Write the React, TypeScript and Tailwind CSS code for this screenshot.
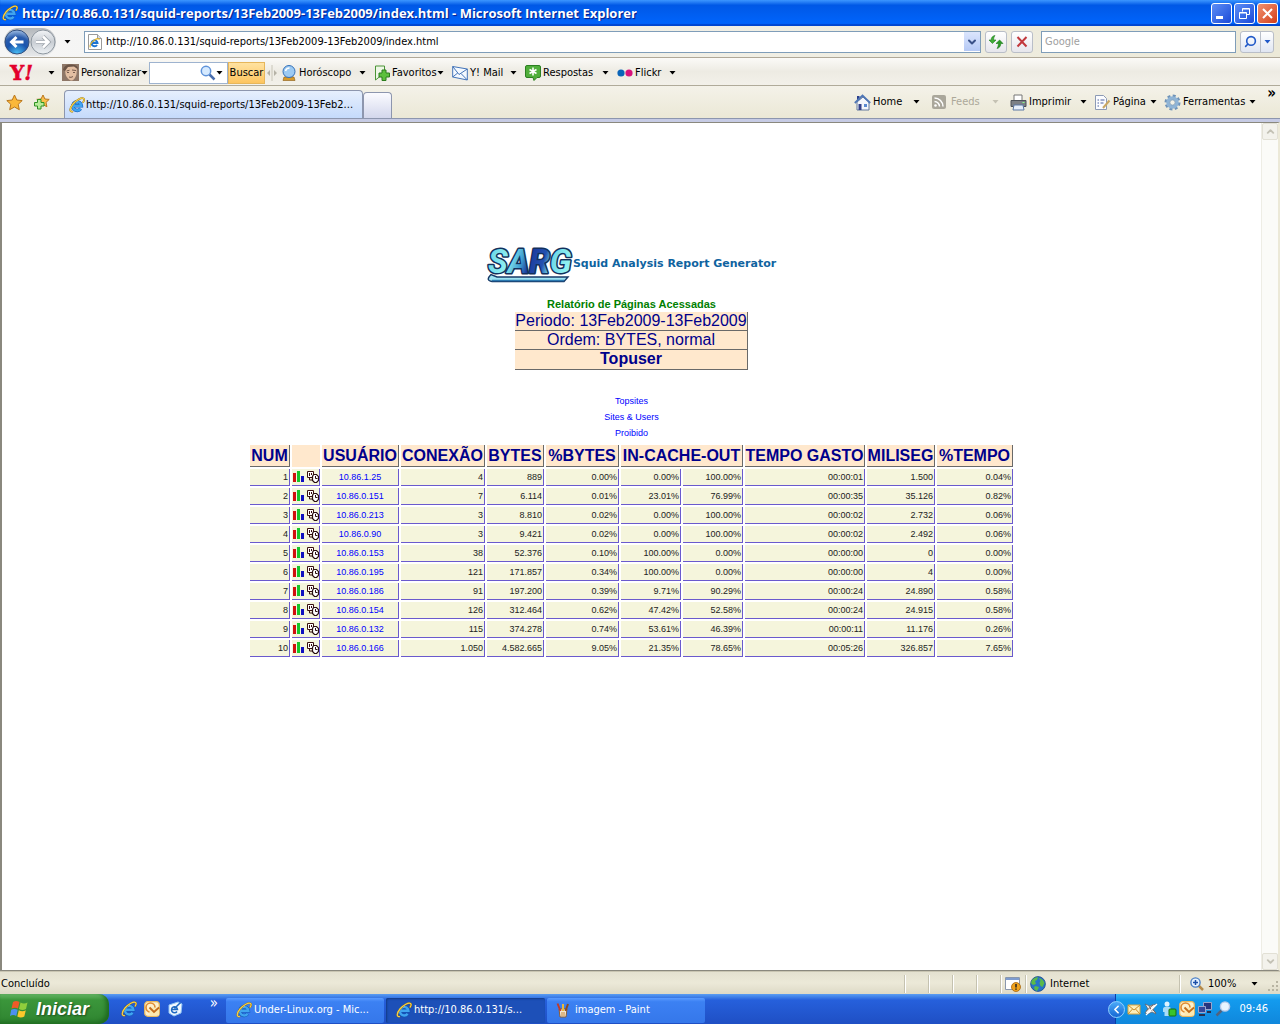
import type { ReactNode } from 'react'
import { ChevronDown, ChevronUp, ChevronLeft, Search } from 'lucide-react'

const columns = [
  { label: 'NUM', span: 1 },
  { label: '', span: 1 },
  { label: 'USUÁRIO', span: 1 },
  { label: 'CONEXÃO', span: 1 },
  { label: 'BYTES', span: 1 },
  { label: '%BYTES', span: 1 },
  { label: 'IN-CACHE-OUT', span: 2 },
  { label: 'TEMPO GASTO', span: 1 },
  { label: 'MILISEG', span: 1 },
  { label: '%TEMPO', span: 1 },
]

// user, connections, bytes, %bytes, cache in, cache out, time, ms, %time
const users = [
  ['10.86.1.25', '4', '889', '0.00%', '0.00%', '100.00%', '00:00:01', '1.500', '0.04%'],
  ['10.86.0.151', '7', '6.114', '0.01%', '23.01%', '76.99%', '00:00:35', '35.126', '0.82%'],
  ['10.86.0.213', '3', '8.810', '0.02%', '0.00%', '100.00%', '00:00:02', '2.732', '0.06%'],
  ['10.86.0.90', '3', '9.421', '0.02%', '0.00%', '100.00%', '00:00:02', '2.492', '0.06%'],
  ['10.86.0.153', '38', '52.376', '0.10%', '100.00%', '0.00%', '00:00:00', '0', '0.00%'],
  ['10.86.0.195', '121', '171.857', '0.34%', '100.00%', '0.00%', '00:00:00', '4', '0.00%'],
  ['10.86.0.186', '91', '197.200', '0.39%', '9.71%', '90.29%', '00:00:24', '24.890', '0.58%'],
  ['10.86.0.154', '126', '312.464', '0.62%', '47.42%', '52.58%', '00:00:24', '24.915', '0.58%'],
  ['10.86.0.132', '115', '374.278', '0.74%', '53.61%', '46.39%', '00:00:11', '11.176', '0.26%'],
  ['10.86.0.166', '1.050', '4.582.665', '9.05%', '21.35%', '78.65%', '00:05:26', '326.857', '7.65%'],
]

function IeIcon({ className = 'size-4' }: { className?: string }) {
  return (
    <svg viewBox="0 0 16 16" className={`${className} shrink-0`} aria-hidden="true">
      <path d="M4 8.800H12.400A4.300 4.300 0 1 0 11.600 11.700" fill="none" stroke="#0f55b4" strokeWidth="3.400" />
      <path d="M4 8.800H12.400A4.300 4.300 0 1 0 11.600 11.700" fill="none" stroke="#3fa4f0" strokeWidth="2.400" />
      <path d="M4.800 6.800Q6 4.500 8.600 4.400" fill="none" stroke="#a5e2ff" strokeWidth="1" />
      <path d="M3.400 14.600C.4 15 .6 11.200 4 7S12.600.2 14.500 1.400c1 .7.6 2.200-.3 3.700" fill="none" stroke="#8a6a14" strokeWidth="1.800" strokeLinecap="round" />
      <path d="M3.400 14.600C.4 15 .6 11.200 4 7S12.600.2 14.500 1.400c1 .7.6 2.200-.3 3.700" fill="none" stroke="#f6cf4a" strokeWidth="1.200" strokeLinecap="round" />
    </svg>
  )
}

function Arrow({ className = 'text-black' }: { className?: string }) {
  return (
    <svg viewBox="0 0 7 4" className={`h-1 w-[7px] shrink-0 ${className}`} aria-hidden="true">
      <path d="M.5 0h6l-3 3.500z" fill="currentColor" />
    </svg>
  )
}

function ToolItem({ icon, label, width, disabled }: { icon: ReactNode; label: string; width: string; disabled?: boolean }) {
  return (
    <button className={`flex h-6 shrink-0 items-center justify-between ${width} ${disabled ? 'text-[#aca899]' : 'text-black'}`} disabled={disabled}>
      <span className="flex items-center gap-0.5 whitespace-nowrap">
        {icon}
        {label}
      </span>
      <Arrow className={disabled ? 'text-[#c5c2b4]' : 'text-black'} />
    </button>
  )
}

function TitleBar() {
  return (
    <header className="flex h-[26px] shrink-0 items-center justify-between bg-linear-to-b from-[#3c96ff] via-[#0058e6] via-20% to-[#0066ff] pl-0.5 pr-0.5 shadow-[inset_0_-2px_1px_#0046d0]">
      <div className="flex min-w-0 items-center gap-1">
        <IeIcon />
        <h1 className="truncate font-['Open_Sans',sans-serif] text-[13px] font-bold text-white [text-shadow:1px_1px_1px_#0a1883]">
          http://10.86.0.131/squid-reports/13Feb2009-13Feb2009/index.html - Microsoft Internet Explorer
        </h1>
      </div>
      <div className="flex shrink-0 gap-0.5">
        <button aria-label="Minimizar" className="flex size-[21px] items-end rounded-[3px] border border-white bg-linear-to-br from-[#5e8df5] to-[#1c48d8] pb-1 pl-1">
          <span className="h-[3px] w-[7px] bg-white" />
        </button>
        <button aria-label="Restaurar" className="flex size-[21px] items-center justify-center rounded-[3px] border border-white bg-linear-to-br from-[#5e8df5] to-[#1c48d8]">
          <svg viewBox="0 0 11 11" className="size-[11px]">
            <path d="M3.500 3.500v-3h7v6h-3M3.500 1h7" fill="none" stroke="#fff" />
            <path d="M.5 4.500h7v6h-7zM.5 5h7" fill="none" stroke="#fff" />
          </svg>
        </button>
        <button aria-label="Fechar" className="flex size-[21px] items-center justify-center rounded-[3px] border border-white bg-linear-to-br from-[#f0916f] to-[#d23a10]">
          <svg viewBox="0 0 11 11" className="size-[11px]">
            <path d="M1 1l9 9M10 1l-9 9" stroke="#fff" strokeWidth="2" />
          </svg>
        </button>
      </div>
    </header>
  )
}

function AddressBar() {
  return (
    <div className="flex h-8 shrink-0 items-center border-b border-[#b0a898] bg-linear-to-r from-[#f6f6f6] to-[#ece9d8] pl-1 pr-1.5">
      <div className="flex h-7 shrink-0 items-center rounded-full bg-linear-to-b from-[#b4b8bc] to-[#e6e8ea]">
        <button aria-label="Voltar" className="size-[26px]">
          <svg viewBox="0 0 26 26" className="size-[26px]">
            <defs>
              <radialGradient id="back" cx=".5" cy="1" r=".95">
                <stop offset="0" stopColor="#4cc4f8" />
                <stop offset=".5" stopColor="#1a54ae" />
                <stop offset=".75" stopColor="#2a5cac" />
                <stop offset="1" stopColor="#8fb0dc" />
              </radialGradient>
            </defs>
            <circle cx="13" cy="13" r="12" fill="url(#back)" stroke="#35507e" />
            <path d="M19.500 13H8M12.500 8L7.500 13l5 5" fill="none" stroke="#fff" strokeWidth="3" />
          </svg>
        </button>
        <button aria-label="Avançar" className="size-[26px]">
          <svg viewBox="0 0 26 26" className="size-[26px]">
            <defs>
              <linearGradient id="fwd" x1="0" y1="0" x2="0" y2="1">
                <stop offset="0" stopColor="#f2f4f6" />
                <stop offset=".5" stopColor="#c9ced4" />
                <stop offset="1" stopColor="#eef2f5" />
              </linearGradient>
            </defs>
            <circle cx="13" cy="13" r="12" fill="url(#fwd)" stroke="#8d969f" />
            <path d="M6 13h12M13 7.500l5.500 5.500-5.500 5.500" fill="none" stroke="#9aa1a8" strokeWidth="4" />
            <path d="M6 13h12M13 7.500l5.500 5.500-5.500 5.500" fill="none" stroke="#fff" strokeWidth="2.500" />
          </svg>
        </button>
      </div>
      <button aria-label="Páginas recentes" className="flex h-6 w-[28px] shrink-0 items-center pl-2">
        <Arrow />
      </button>
      <label className="flex h-[22px] min-w-0 flex-1 items-center border border-[#7f9db9] bg-white pl-0.5">
        <svg viewBox="0 0 16 16" className="size-4 shrink-0" aria-hidden="true">
          <path d="M1.500.5h9l4 4v11h-13z" fill="#fff" stroke="#9a9a9a" />
          <path d="M10.500.5v4h4" fill="#ddd" stroke="#9a9a9a" />
          <path d="M4.500 9H10.500A3 3 0 1 0 10 11" fill="none" stroke="#1d74d2" strokeWidth="2" />
          <path d="M3.400 13.500c-1.400-1.500.6-5 3.600-7s5-2.500 5.200-.8" fill="none" stroke="#e3b52c" strokeWidth="1.200" />
        </svg>
        <input aria-label="Endereço" defaultValue="http://10.86.0.131/squid-reports/13Feb2009-13Feb2009/index.html" className="h-full min-w-0 flex-1 px-[3px] outline-none" />
        <button aria-label="Mostrar endereços" className="flex h-[19px] w-4 items-center justify-center bg-linear-to-b from-[#dbe5fd] to-[#b5c9f5] text-[#3a5187]">
          <ChevronDown size={12} strokeWidth={4} />
        </button>
      </label>
      <button aria-label="Atualizar" className="ml-1 flex size-[22px] shrink-0 items-center justify-center rounded-[3px] border border-[#b9bec8] bg-linear-to-b from-white to-[#e6e6ec]">
        <svg viewBox="0 0 16 16" className="size-4">
          <path d="M1 6h2.200C3.200 3.500 4.500 2 7 1.500 6 3 5.600 4 5.600 6H8L4.400 9.500z" fill="#3fae36" stroke="#1b7a1a" strokeWidth=".6" />
          <path d="M15 9.500h-2.200c0 2.500-1.300 4.500-3.800 5 1-1.500 1.400-3 1.400-5H8L11.600 6z" fill="#2a9a24" stroke="#1b7a1a" strokeWidth=".6" />
        </svg>
      </button>
      <button aria-label="Parar" className="ml-1 flex size-[22px] shrink-0 items-center justify-center rounded-[3px] border border-[#b9bec8] bg-linear-to-b from-white to-[#e6e6ec]">
        <svg viewBox="0 0 12 12" className="size-3">
          <path d="M1.500 1l9 9.500M10.500 1l-9 9.500" stroke="#c2383c" strokeWidth="2" />
        </svg>
      </button>
      <input type="search" aria-label="Google" placeholder="Google" className="ml-2 h-[22px] w-[195px] shrink-0 border border-[#7f9db9] bg-white px-[3px] outline-none placeholder:text-[#a0a0a0]" />
      <div className="ml-1 flex h-[22px] shrink-0 items-center rounded-[3px] border border-[#b9bec8] bg-linear-to-b from-white to-[#e0e6f2]">
        <button aria-label="Pesquisar" className="flex h-full w-5 items-center justify-center border-r border-[#b9bec8] text-[#2159c8]">
          <Search size={13} strokeWidth={3} className="-scale-x-100" />
        </button>
        <button aria-label="Opções de pesquisa" className="flex h-full w-3 items-center justify-center">
          <Arrow className="text-[#2159c8]" />
        </button>
      </div>
    </div>
  )
}

function YahooBar() {
  return (
    <div className="flex h-7 shrink-0 items-center border-b border-[#b0ab9a] bg-linear-to-b from-[#fbfaf7] via-[#edebe3] to-[#f3f1ea] pt-0.5 pl-2">
      <button aria-label="Yahoo!" className="flex w-[47px] shrink-0 items-center justify-between">
        <svg viewBox="0 0 34 24" className="h-6 w-[34px] overflow-visible">
          <text x="2" y="19" fontFamily="DejaVu Serif, serif" fontWeight="bold" fontSize="20" fill="#e3002b" stroke="#e3002b" strokeWidth=".5">
            Y
            <tspan fontStyle="italic">!</tspan>
          </text>
        </svg>
        <Arrow />
      </button>
      <div className="ml-[7px] flex">
        <ToolItem
          width="w-[84px]"
          label="Personalizar"
          icon={
            <svg viewBox="0 0 17 17" className="size-[17px]" aria-hidden="true">
              <rect width="17" height="17" fill="#8e7767" />
              <path d="M3 4c3-3 10-3 12 0l-.5 6c-1 4-3 6.500-5 6.500S4.500 14 3.500 10z" fill="#e3bfa2" />
              <path d="M1 6C2 1 6 0 10 .5s6 2 6 5l-4-3-6 .5-3 4z" fill="#6b5446" />
              <path d="M4.500 7l3-.8M10 6l4 .5M5 8.500h2M11 8.500h2M7 13q2 1 4-.5" fill="none" stroke="#5a4238" strokeWidth=".8" />
            </svg>
          }
        />
      </div>
      <form className="ml-[3px] flex h-[22px] shrink-0" onSubmit={(e) => e.preventDefault()}>
        <label className="flex w-[79px] items-center border border-[#9eb3cf] bg-white pr-1">
          <input aria-label="Busca Yahoo!" className="w-0 flex-1 outline-none" />
          <svg viewBox="0 0 16 16" className="size-4 shrink-0" aria-hidden="true">
            <path d="M9.500 9.500l5 5" stroke="#4b6fae" strokeWidth="2.500" />
            <circle cx="6" cy="6" r="4.700" fill="#d6eaff" stroke="#5f93da" strokeWidth="1.500" />
          </svg>
          <Arrow />
        </label>
        <button className="w-[37px] border border-[#e6b65a] bg-linear-to-b from-[#ffe2a0] to-[#fdc55e]">Buscar</button>
      </form>
      <svg viewBox="0 0 10 16" className="mx-0.5 h-4 w-2.5 shrink-0" aria-hidden="true">
        <path d="M5 0v16" stroke="#c8c5b8" />
        <path d="M3 5v6L0 8zM7 5v6l3-3z" fill="#b5b2a6" />
      </svg>
      <div className="ml-0.5 flex gap-2">
        <ToolItem
          width="w-[85px]"
          label="Horóscopo"
          icon={
            <svg viewBox="0 0 16 16" className="size-4" aria-hidden="true">
              <path d="M3 12h10l1 3.500H2z" fill="#d69a2c" stroke="#8a5a12" strokeWidth=".6" />
              <circle cx="8" cy="6.500" r="6" fill="#9ccaf2" stroke="#3470b8" />
              <path d="M4.500 6c.5-2 2-3 4-3" stroke="#fff" strokeWidth="1.500" fill="none" />
            </svg>
          }
        />
        <ToolItem
          width="w-[70px]"
          label="Favoritos"
          icon={
            <svg viewBox="0 0 16 16" className="size-4" aria-hidden="true">
              <path d="M1.500 1h9v13l-4-3-5 4z" fill="#eef7e6" stroke="#4b9437" />
              <path d="M8 5h4v3h3.500v4H12v3.500H8V12H5V8h3z" fill="#5cc03c" stroke="#2a7d1d" />
            </svg>
          }
        />
        <ToolItem
          width="w-[65px]"
          label="Y! Mail"
          icon={
            <svg viewBox="0 0 16 16" className="size-4" aria-hidden="true">
              <path d="M.7 1.500L15.300 4v11L.7 12z" fill="#f4f9ff" stroke="#4474b8" />
              <path d="M.7 1.500L7 9.500 15.300 4M.7 12l5-4M15.300 15L9 8.500" fill="none" stroke="#4474b8" />
            </svg>
          }
        />
        <ToolItem
          width="w-[84px]"
          label="Respostas"
          icon={
            <svg viewBox="0 0 16 16" className="size-4" aria-hidden="true">
              <path d="M2 .5h12q1.500 0 1.500 1.500v9q0 1.500-1.500 1.500h-2l-3 3-1-3H2Q.5 12.500.5 11V2Q.5.5 2 .5z" fill="#4fae3a" stroke="#2c7f22" />
              <path d="M8 2.500v8M4.500 4.500l7 4M11.500 4.500l-7 4" stroke="#fff" strokeWidth="1.600" />
            </svg>
          }
        />
        <ToolItem
          width="w-[59px]"
          label="Flickr"
          icon={
            <svg viewBox="0 0 16 16" className="size-4" aria-hidden="true">
              <circle cx="4" cy="8" r="3.600" fill="#0a64b8" />
              <circle cx="12" cy="8" r="3.600" fill="#d8127c" />
            </svg>
          }
        />
      </div>
    </div>
  )
}

function TabBar() {
  return (
    <div className="flex h-8 shrink-0 items-end bg-linear-to-b from-[#f4f2e9] to-[#ebe8d6] pl-1.5">
      <div className="flex h-8 shrink-0 items-center gap-2.5">
        <button aria-label="Favoritos">
          <svg viewBox="0 0 17 17" className="size-[17px]">
            <path d="M8.500 1l2.300 5 5.400.6-4 3.700 1.100 5.400-4.800-2.700-4.800 2.700 1.100-5.400-4-3.700 5.400-.6z" fill="#fbb83a" stroke="#b9761c" />
          </svg>
        </button>
        <button aria-label="Adicionar a favoritos">
          <svg viewBox="0 0 17 17" className="size-[17px]">
            <path d="M10 1l1.900 4 4.300.4-3.200 3 .9 4.300-3.900-2.100-3.900 2.100.9-4.300-3.200-3L8 5z" fill="#fbc04a" stroke="#b9761c" />
            <path d="M4.500 5.500h3.500v3h3v3.500H8v3H4.500v-3h-3V8.500h3z" fill="#b8ec9a" stroke="#2f9223" />
          </svg>
        </button>
      </div>
      <a href="#report" className="ml-3.5 flex h-7 w-[299px] shrink-0 items-center gap-px rounded-t-[4px] border border-b-0 border-[#8d96ae] bg-linear-to-b from-[#e6effd] to-[#c5dafb] px-1">
        <IeIcon />
        <span className="whitespace-nowrap">http://10.86.0.131/squid-reports/13Feb2009-13Feb2...</span>
      </a>
      <button aria-label="Nova guia" className="h-[26px] w-[29px] shrink-0 rounded-t-[4px] border border-b-0 border-[#8d96ae] bg-linear-to-b from-[#fbfbff] to-[#d3d7ec]" />
      <div className="ml-auto flex h-8 shrink-0 items-center gap-[11px] pr-6">
        <ToolItem
          width="w-[66px]"
          label="Home"
          icon={
            <svg viewBox="0 0 17 17" className="size-[17px]" aria-hidden="true">
              <path d="M3 8v8h12V8L9 3z" fill="#f3f6fb" stroke="#63789c" />
              <path d="M3 2h2.500v4H3z" fill="#2b3f8c" />
              <path d="M.8 9L8.500 1.500 16.200 9" fill="none" stroke="#4f76b5" strokeWidth="1.800" />
              <path d="M4.500 10h3v6h-3z" fill="#33418a" />
              <path d="M10 10h3v3h-3z" fill="#5a8ad0" />
            </svg>
          }
        />
        <ToolItem
          width="w-[68px]"
          label="Feeds"
          disabled
          icon={
            <svg viewBox="0 0 16 16" className="mr-0.5 size-4" aria-hidden="true">
              <rect x="1" y="1" width="14" height="14" rx="2" fill="#aaa79b" />
              <circle cx="4.500" cy="11.500" r="1.300" fill="#fff" />
              <path d="M3.500 7.500a5 5 0 0 1 5 5M3.500 4a8.500 8.500 0 0 1 8.500 8.500" fill="none" stroke="#fff" strokeWidth="1.500" />
            </svg>
          }
        />
        <ToolItem
          width="w-[77px]"
          label="Imprimir"
          icon={
            <svg viewBox="0 0 17 17" className="size-[17px]" aria-hidden="true">
              <path d="M4 1h8v6H4z" fill="#fff" stroke="#777" />
              <path d="M1 6.500h15v6H1z" fill="#7c8086" stroke="#4c5158" />
              <path d="M4 11h9l1 5H3z" fill="#e6eefa" stroke="#5d78a4" />
              <path d="M12.500 8.500h2" stroke="#8f8" />
            </svg>
          }
        />
        <div className="-ml-1 flex gap-[7px]">
          <ToolItem
            width="w-[63px]"
            label="Página"
            icon={
              <svg viewBox="0 0 17 17" className="size-[17px]" aria-hidden="true">
                <path d="M1.500 1.500h8l3 3v11h-11z" fill="#fbfcff" stroke="#8c9ab5" />
                <path d="M3.500 6h1.500M6.500 6h4M3.500 9h1.500M6.500 9h3M3.500 12h1.500" stroke="#4c62a0" />
                <path d="M15.500 6.500L9 14" stroke="#c9a763" strokeWidth="2" />
              </svg>
            }
          />
          <ToolItem
            width="w-[92px]"
            label="Ferramentas"
            icon={
              <svg viewBox="0 0 17 17" className="size-[17px]" aria-hidden="true">
                <circle cx="8.500" cy="8.500" r="6.800" fill="none" stroke="#6f93b8" strokeWidth="2.400" strokeDasharray="3 2.340" />
                <circle cx="8.500" cy="8.500" r="4.500" fill="none" stroke="#8fb4d6" strokeWidth="3.500" />
                <circle cx="8.500" cy="8.500" r="2.600" fill="#f3f1e6" stroke="#5d83a8" strokeWidth=".6" />
              </svg>
            }
          />
        </div>
      </div>
      <button aria-label="Mais comandos" className="absolute right-1 top-[86px] text-[15px] leading-none font-bold">
        »
      </button>
    </div>
  )
}

function SargLogo() {
  return (
    <svg viewBox="0 0 86 42" className="h-[42px] w-[86px] overflow-visible" role="img" aria-label="SARG">
      <defs>
        <linearGradient id="sarg" x1="0" y1="0" x2="1" y2=".15">
          <stop offset="0" stopColor="#63cfe4" />
          <stop offset=".3" stopColor="#8ff0f2" />
          <stop offset=".46" stopColor="#3f9fd0" />
          <stop offset=".56" stopColor="#1c3c9e" />
          <stop offset=".72" stopColor="#2352b0" />
          <stop offset=".82" stopColor="#6fd8e8" />
          <stop offset="1" stopColor="#8ff0f2" />
        </linearGradient>
      </defs>
      <path d="M4 31.500q-6 6 1 7h72l4-4.500H10z" fill="#9fe4f2" stroke="#173a68" strokeWidth="1.400" />
      <path d="M5 37.500h72" stroke="#2a78b0" strokeWidth="1.500" />
      <text
        x="1"
        y="30"
        fontFamily="Roboto, sans-serif"
        fontStyle="italic"
        fontWeight="bold"
        fontSize="33"
        strokeLinejoin="round"
        fill="url(#sarg)"
        stroke="#12305c"
        strokeWidth="3"
        paintOrder="stroke"
      >
        SARG
      </text>
    </svg>
  )
}

function RowIcons() {
  return (
    <div className="flex items-center gap-0.5 pl-px">
      <a href="#graph" aria-label="Gráfico">
        <svg viewBox="0 0 12 12" className="size-3" shapeRendering="crispEdges">
          <path d="M0 2h3v9H0z" fill="#d01010" />
          <path d="M4 0h3v11H4z" fill="#17c52a" />
          <path d="M8 5h3v6H8z" fill="#1010c0" />
        </svg>
      </a>
      <a href="#datetime" aria-label="Data e hora">
        <svg viewBox="0 0 12 12" className="size-3">
          <path d="M.5.5h6v6h-6z" fill="#fff" stroke="#3a1010" />
          <path d="M2.500 2v3M4.500 2v2M2.500 7v2h3" stroke="#3a1010" fill="none" />
          <path d="M6.500 3.500h3l2 2v4l-2 2h-2l-2-2v-4z" fill="#fff" stroke="#2a1010" strokeWidth="1.200" />
          <path d="M8.500 5v2.500h2" stroke="#2a1010" fill="none" />
        </svg>
      </a>
    </div>
  )
}

function Report() {
  const cell = 'h-[17px] border-r border-b border-[#6a5acd] bg-[#f5f5dc] pr-px text-right text-[#222]'
  return (
    <main id="report" className="flex min-w-0 flex-1 flex-col items-center overflow-hidden bg-white pt-[120px] font-['Liberation_Sans',Arial,sans-serif]">
      <div className="flex items-center">
        <SargLogo />
        <h2 className="font-['DejaVu_Sans',Verdana,sans-serif] text-[11px] leading-4 font-bold text-[#0f63a0]">Squid Analysis Report Generator</h2>
      </div>
      <h3 className="mt-3 text-[11px] leading-[15px] font-bold text-[#008000]">Relatório de Páginas Acessadas</h3>
      <div className="text-center text-base leading-[18px] text-[#00008b]">
        <p className="border-r border-b border-[#696969] bg-[#ffe8cd]">Periodo: 13Feb2009-13Feb2009</p>
        <p className="border-r border-b border-[#696969] bg-[#ffe8cd]">Ordem: BYTES, normal</p>
        <p className="border-r border-b border-[#696969] bg-[#ffe8cd] pb-px font-bold">Topuser</p>
      </div>
      <nav className="mt-[23px] flex flex-col items-center pb-0.5 text-[9px] leading-4 text-[#0000ff]">
        <a href="#topsites">Topsites</a>
        <a href="#sites">Sites &amp; Users</a>
        <a href="#denied">Proibido</a>
      </nav>
      <table className="w-[767px] table-fixed border-separate border-spacing-[2px] text-[9px] leading-[15px]">
        <colgroup>
          <col className="w-[40px]" />
          <col className="w-[28px]" />
          <col className="w-[77px]" />
          <col className="w-[84px]" />
          <col className="w-[57px]" />
          <col className="w-[73px]" />
          <col className="w-[60px]" />
          <col className="w-[60px]" />
          <col className="w-[120px]" />
          <col className="w-[68px]" />
          <col className="w-[76px]" />
        </colgroup>
        <thead>
          <tr>
            {columns.map((c, i) => (
              <th
                key={i}
                colSpan={c.span}
                className={`h-[22px] bg-[#ffe8cd] p-0 text-center text-base leading-5 font-bold whitespace-nowrap text-[#00008b] ${c.label ? 'border-r border-b border-[#696969]' : ''}`}
              >
                {c.label}
              </th>
            ))}
          </tr>
        </thead>
        <tbody>
          {users.map(([user, ...values], i) => (
            <tr key={user}>
              <td className={cell}>{i + 1}</td>
              <td className={cell}>
                <RowIcons />
              </td>
              <td className="h-[17px] border-r border-b border-[#6a5acd] bg-[#f5f5dc] text-center">
                <a href={`#${user}`} className="text-[#0000ff]">
                  {user}
                </a>
              </td>
              {values.map((v, j) => (
                <td key={j} className={cell}>
                  {v}
                </td>
              ))}
            </tr>
          ))}
        </tbody>
      </table>
    </main>
  )
}

function ScrollBar() {
  return (
    <div className="flex w-[17px] shrink-0 flex-col justify-between border-l border-[#eeede5] bg-[#fbfbf8] text-[#c3c1b5]">
      <button aria-label="Rolar para cima" className="flex h-[17px] items-center justify-center rounded-[2px] border border-[#e2e0d5] bg-[#f3f2ec]">
        <ChevronUp size={11} strokeWidth={4} />
      </button>
      <button aria-label="Rolar para baixo" className="flex h-[17px] items-center justify-center rounded-[2px] border border-[#e2e0d5] bg-[#f3f2ec]">
        <ChevronDown size={11} strokeWidth={4} />
      </button>
    </div>
  )
}

function StatusBar() {
  return (
    <div className="flex h-[23px] shrink-0 items-center border-t border-[#c9c5b2] bg-linear-to-b from-[#e4e1d0] via-[#ece9d8] to-[#ddd9c6] pt-0.5 pl-px">
      <span className="flex-1">Concluído</span>
      <div className="flex h-[18px] items-center">
        {[0, 1, 2, 3].map((n) => (
          <span key={n} className="h-full w-6 border-l border-[#c5c2b0] shadow-[inset_1px_0_0_#fff]" />
        ))}
        <span className="flex h-full w-[25px] items-center border-l border-[#c5c2b0] pl-1 shadow-[inset_1px_0_0_#fff]">
          <svg viewBox="0 0 16 16" className="size-4" aria-hidden="true">
            <path d="M.5 1.500h14v12H.5z" fill="#fff" stroke="#8a97ad" />
            <path d="M1 2h13v2H1z" fill="#7e9cd0" />
            <circle cx="11" cy="11" r="4.500" fill="#f0a21c" stroke="#a8650c" strokeWidth=".8" />
            <path d="M11 8v3.500M11 12.500v1.300" stroke="#222" strokeWidth="1.500" />
          </svg>
        </span>
        <span className="flex h-full w-[154px] items-center gap-1 border-l border-[#c5c2b0] pl-1 shadow-[inset_1px_0_0_#fff]">
          <svg viewBox="0 0 16 16" className="size-4" aria-hidden="true">
            <circle cx="8" cy="8" r="7.400" fill="#2874c8" stroke="#1c4a86" strokeWidth=".8" />
            <path d="M2 4q3-3 6-3l-1 3-2 1 1 3-3 1-2-2zM9 2q4 1 5.500 5l-2 4-2-1-1-3 1-2zM5 10l4 1-2 4q-3-1-3-3z" fill="#5cba48" />
          </svg>
          Internet
        </span>
        <button className="flex h-full w-[79px] items-center justify-between border-l border-[#c5c2b0] pl-2.5 shadow-[inset_1px_0_0_#fff]">
          <span className="flex items-center gap-1">
            <svg viewBox="0 0 14 14" className="size-3.5" aria-hidden="true">
              <path d="M8.500 8.500l4.500 4.500" stroke="#b58a4a" strokeWidth="2.500" />
              <circle cx="5.500" cy="5.500" r="4.600" fill="#e4f1ff" stroke="#4a7fc6" strokeWidth="1.400" />
              <path d="M5.500 3v5M3 5.500h5" stroke="#1b4fa8" strokeWidth="1.500" />
            </svg>
            100%
          </span>
          <Arrow />
        </button>
        <svg viewBox="0 0 12 12" className="ml-2.5 size-3 self-end" aria-hidden="true">
          <path d="M8 0h2v2H8zM4 4h2v2H4zM8 4h2v2H8zM0 8h2v2H0zM4 8h2v2H4zM8 8h2v2H8z" fill="#b8b4a2" />
        </svg>
      </div>
    </div>
  )
}

function OutlookIcon() {
  return (
    <svg viewBox="0 0 16 16" className="size-4" aria-hidden="true">
      <rect x=".7" y=".7" width="14.600" height="14.600" rx="3" fill="#fdf0cc" stroke="#e8b75c" strokeWidth="1.200" />
      <circle cx="6.500" cy="6.500" r="4.500" fill="none" stroke="#e08a30" strokeWidth="1.600" />
      <path d="M5.500 6.500h9.500v8H5.500z" fill="#fce9b0" />
      <path d="M5.500 6.500l4.500 4.500 5-4.500" fill="none" stroke="#c46c1a" strokeWidth="1.800" />
    </svg>
  )
}

function Taskbar() {
  return (
    <footer className="flex h-[30px] shrink-0 items-stretch bg-linear-to-b from-[#5a9df2] via-[#2660dc] via-20% to-[#1f4fc4] text-white">
      <button className="flex w-[109px] shrink-0 items-center gap-1.5 rounded-r-[10px] bg-linear-to-b from-[#68b868] via-[#3b963b] via-20% to-[#2f8430] pl-2.5 shadow-[inset_-3px_-2px_4px_#1f6a20]">
        <svg viewBox="0 0 20 18" className="h-[18px] w-5" aria-hidden="true">
          <path d="M3 2q3-2 6.500 0L8 8.500Q5 7 1.500 8.500z" fill="#ee5a28" />
          <path d="M10.500 2.500q3.500 2 7 0L16 9q-3.500 2-7 0z" fill="#8fce3c" />
          <path d="M1.200 9.800q3-1.800 6.500 0L6.200 16q-3-1.800-6.200 0z" fill="#4d90f0" />
          <path d="M8.800 10.200q3.500 2 7 0l-1.500 6.300q-3.500 2-7 0z" fill="#fcc82c" />
        </svg>
        <span className="font-['Liberation_Sans',Arial,sans-serif] text-lg leading-none font-bold italic [text-shadow:1px_1px_2px_#1d4a1d]">Iniciar</span>
      </button>
      <div className="flex w-[117px] shrink-0 items-center gap-[7px] pl-3">
        <IeIcon />
        <OutlookIcon />
        <svg viewBox="0 0 16 16" className="size-4" aria-hidden="true">
          <path d="M2 4l9-3 4 2-1 9-7 3-5-3z" fill="#f2f8ff" stroke="#8fc4f4" />
          <path d="M4.500 8.500H10.500A3 3 0 1 0 10 10.500M7.500 7.500l6-6" fill="none" stroke="#1d68c0" strokeWidth="1.500" />
        </svg>
        <span className="ml-auto mr-2 self-start pt-0.5 text-[15px] leading-none">»</span>
      </div>
      <div className="flex flex-1 items-center gap-0.5 pt-0.5">
        <button className="flex h-[25px] w-[158px] items-center gap-0.5 rounded-[2px] bg-linear-to-b from-[#5a9bff] via-[#3c81f3] via-15% to-[#3577ea] pl-2.5 whitespace-nowrap">
          <IeIcon />
          Under-Linux.org - Mic...
        </button>
        <button className="flex h-[25px] w-[159px] items-center gap-0.5 rounded-[2px] bg-[#1d50b8] pl-2.5 whitespace-nowrap shadow-[inset_1px_1px_2px_#123a86]">
          <IeIcon />
          http://10.86.0.131/s...
        </button>
        <button className="flex h-[25px] w-[158px] items-center gap-1 rounded-[2px] bg-linear-to-b from-[#5a9bff] via-[#3c81f3] via-15% to-[#3577ea] pl-2 whitespace-nowrap">
          <svg viewBox="0 0 16 16" className="size-4" aria-hidden="true">
            <path d="M4 7h8l-1 8H5z" fill="#f3e6d2" stroke="#8a5c34" />
            <path d="M5.500 9L2.500 1.500" stroke="#c23a2a" strokeWidth="2" />
            <path d="M8 9V2" stroke="#e9b93c" strokeWidth="2" />
            <path d="M10.500 9l2.500-7" stroke="#8a4a20" strokeWidth="2" />
            <path d="M7 10v4M9 10v4" stroke="#c98a3a" />
          </svg>
          imagem - Paint
        </button>
      </div>
      <div className="flex shrink-0 items-center gap-0.5 border-l border-[#0a3ea8] bg-linear-to-b from-[#3cb8f8] via-[#139bee] via-20% to-[#1087dc] pr-3">
        <button aria-label="Mostrar ícones ocultos" className="-ml-2 flex size-[17px] items-center justify-center rounded-full border border-[#8fd0ff] bg-linear-to-b from-[#4aa9f8] to-[#1668d4]">
          <ChevronLeft size={13} strokeWidth={3} />
        </button>
        <svg viewBox="0 0 14 16" className="h-4 w-3.5" aria-hidden="true">
          <path d="M1 4h12v9H1z" fill="#fdedb8" stroke="#d9a53c" />
          <path d="M1 4l6 5 6-5M1 13l4.500-5M13 13L8.500 8" fill="none" stroke="#c98f2a" />
        </svg>
        <svg viewBox="0 0 16 16" className="size-4" aria-hidden="true">
          <path d="M2 3l5 2 2-1 5-1-4 5 3 5-4-2-4 2-3-1 3-4z" fill="#f0f0ee" stroke="#5a6672" strokeWidth=".8" />
          <path d="M3 10l7-6M6 5l3 5M9 8l4 4" fill="none" stroke="#7c6a60" />
          <path d="M3 14L14 3" stroke="#fff" strokeWidth="1.200" />
        </svg>
        <svg viewBox="0 0 16 16" className="size-4" aria-hidden="true">
          <circle cx="6" cy="3" r="2.500" fill="#dff3ff" />
          <path d="M2 11V8q0-2.500 4-2.500T10 8v3H9v4H3.500v-4z" fill="#a9dcf8" />
          <rect x="8" y="8" width="7" height="7" rx="1" fill="#39c42c" stroke="#156e10" />
        </svg>
        <OutlookIcon />
        <svg viewBox="0 0 16 16" className="size-4" aria-hidden="true">
          <path d="M6.500 1.500h8v7h-8z" fill="#26357e" stroke="#9aa6cc" />
          <path d="M1.500 5.500h7v6h-7z" fill="#34479a" stroke="#9aa6cc" />
          <path d="M2 14h6M10 11h4" stroke="#26304f" strokeWidth="2" />
        </svg>
        <svg viewBox="0 0 16 16" className="size-4" aria-hidden="true">
          <path d="M6.500 9.500L1.500 14.500" stroke="#53627c" strokeWidth="2.500" />
          <circle cx="10" cy="5.500" r="4.600" fill="#e8f4ff" stroke="#b5c8e8" strokeWidth="1.400" />
        </svg>
        <time className="ml-1.5">09:46</time>
      </div>
    </footer>
  )
}

export default function App() {
  return (
    <div className="relative flex h-screen flex-col overflow-hidden bg-[#ece9d8] font-['DejaVu_Sans_Condensed',Tahoma,sans-serif] text-[11px] leading-4 text-black">
      <TitleBar />
      <AddressBar />
      <YahooBar />
      <TabBar />
      <div className="h-1 shrink-0 border-t border-[#8d96ae] bg-[#c6cbe4]" />
      <div className="flex min-h-0 flex-1 border-x-2 border-t border-b border-[#8a887e] border-r-[#ece9d8] bg-white">
        <Report />
        <ScrollBar />
      </div>
      <StatusBar />
      <Taskbar />
    </div>
  )
}
